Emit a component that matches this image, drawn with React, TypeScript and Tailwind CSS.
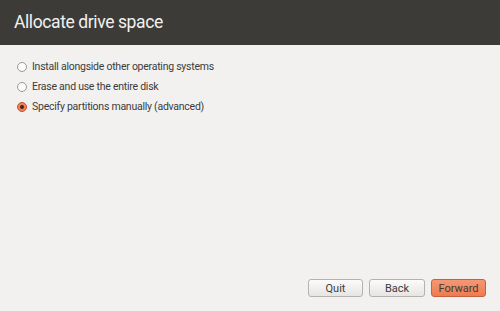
import { useState } from 'react';

const OPTIONS = [
  'Install alongside other operating systems',
  'Erase and use the entire disk',
  'Specify partitions manually (advanced)',
];

export default function App() {
  const [selected, setSelected] = useState(2);

  return (
    <div className="flex h-[311px] w-[500px] flex-col bg-[#f2f1f0] font-['Roboto',sans-serif] text-[#3c3c3c]">
      {/* Title bar */}
      <div className="flex h-[45px] shrink-0 items-center bg-[#3c3b37] pl-[14px]">
        <h1 className="text-[17.5px] leading-none tracking-[-0.4px] text-[#f2f1f0]">Allocate drive space</h1>
      </div>

      {/* Options */}
      <div className="flex flex-col gap-[6px] pl-[17px] pt-[15px]">
        {OPTIONS.map((label, i) => {
          const on = i === selected;
          return (
            <label
              key={label}
              onClick={() => setSelected(i)}
              className="flex h-[14px] cursor-pointer items-center gap-[5px] text-[10.5px] leading-none tracking-[-0.25px]"
            >
              <span
                className={`flex h-[10px] w-[10px] items-center justify-center rounded-full border ${
                  on ? 'border-[#c4542e] bg-[#f08058]' : 'border-[#9a9995] bg-[#fbfbfa]'
                }`}
              >
                {on && <span className="h-[4px] w-[4px] rounded-full bg-[#4a2418]" />}
              </span>
              <span>{label}</span>
            </label>
          );
        })}
      </div>

      <div className="flex-1" />

      {/* Buttons */}
      <div className="flex justify-end gap-[6px] pb-[14px] pr-[14px]">
        <button className="h-[18px] w-[55px] rounded-[3px] border border-[#b3b2ae] bg-gradient-to-b from-[#fbfbfa] to-[#e6e5e3] text-[11px] leading-none text-[#3c3c3c]">
          Quit
        </button>
        <button className="h-[18px] w-[56px] rounded-[3px] border border-[#b3b2ae] bg-gradient-to-b from-[#fbfbfa] to-[#e6e5e3] text-[11px] leading-none text-[#3c3c3c]">
          Back
        </button>
        <button className="h-[18px] w-[55px] rounded-[3px] border border-[#c8603e] bg-gradient-to-b from-[#f59873] to-[#ee7a50] text-[11px] leading-none text-[#3c3c3c]">
          Forward
        </button>
      </div>
    </div>
  );
}
